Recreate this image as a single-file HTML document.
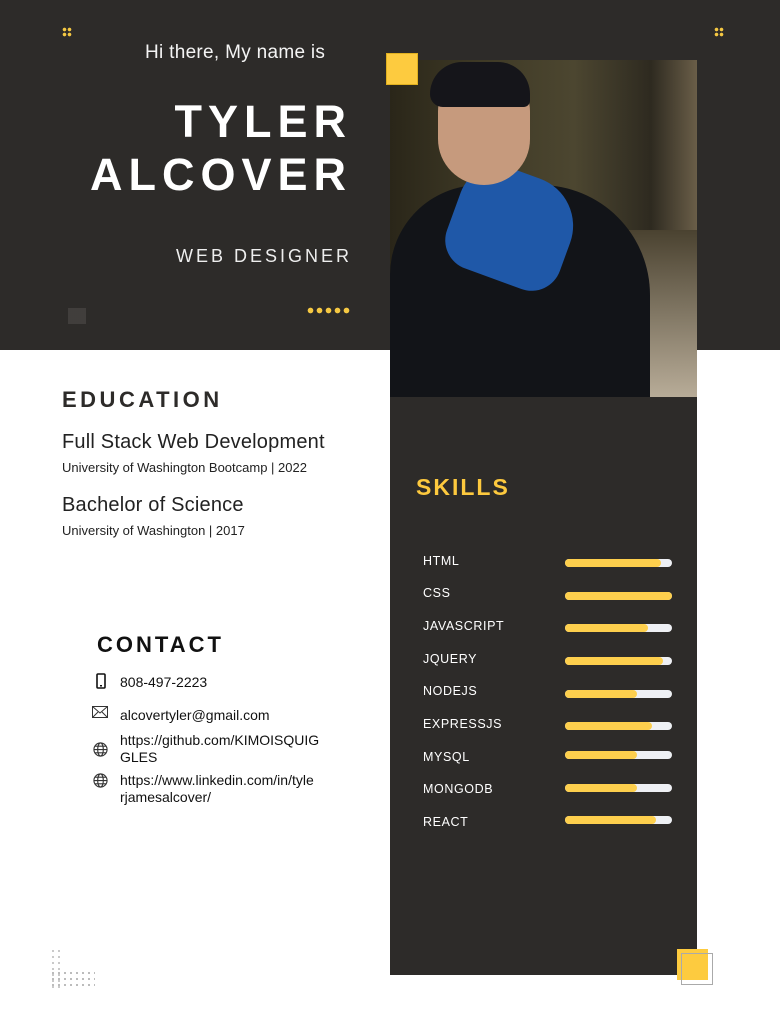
<!DOCTYPE html>
<html><head><meta charset="utf-8"><style>
*{margin:0;padding:0;box-sizing:border-box}
body{width:780px;height:1010px;background:#fff;position:relative;overflow:hidden;font-family:"Liberation Sans",sans-serif}
.a{position:absolute}
.hdr{left:0;top:0;width:780px;height:350px;background:#2d2b29}
.dots4{width:10px;height:10px;background:radial-gradient(circle,#f5c842 1.6px,transparent 2px) 0 0/5px 5px}
.w{color:#fff}
.skill{left:423px;color:#fff;font-size:12.5px;letter-spacing:.6px}
.bar{left:565px;width:107px;height:8px;border-radius:4px;background:#eef0f4}
.bar i{display:block;height:8px;border-radius:4px;background:#fdcf4d}
.ct{left:120px;font-size:14px;color:#111;line-height:17px}
</style></head><body>
<div class="a hdr"></div>
<div class="a dots4" style="left:62px;top:27px"></div>
<div class="a dots4" style="left:714px;top:27px"></div>
<div class="a w" style="left:145px;top:42px;font-size:19px;letter-spacing:.3px;color:#f4f4f4">Hi there, My name is</div>
<div class="a w" style="right:428px;top:95px;font-size:45px;font-weight:bold;letter-spacing:6px;line-height:53px;text-align:right">TYLER<br>ALCOVER</div>
<div class="a w" style="right:428px;top:246px;font-size:18px;letter-spacing:3px;color:#eee">WEB DESIGNER</div>
<div class="a" style="left:68px;top:308px;width:18px;height:16px;background:radial-gradient(circle,#5a5856 .6px,transparent .9px) 0 0/2px 2px"></div>
<div class="a" style="left:306px;top:307px;width:45px;height:7px;background:radial-gradient(circle,#f5c842 2.6px,transparent 3px) 0 0/9px 7px"></div>
<!-- photo -->
<div class="a" style="left:390px;top:60px;width:307px;height:337px;overflow:hidden;background:linear-gradient(90deg,#2a2619 0%,#3f3a26 30%,#4c4630 60%,#2e2a20 85%,#6a5e48 100%)">
 <div class="a" style="left:210px;top:170px;width:97px;height:167px;background:linear-gradient(#4a4230,#b8ac98)"></div>
 <div class="a" style="left:0;top:125px;width:260px;height:230px;background:#121418;border-radius:90px 110px 0 0"></div>
 <div class="a" style="left:62px;top:112px;width:120px;height:110px;background:#1f58a8;border-radius:40px 50px 30px 30px;transform:rotate(20deg)"></div>
 <div class="a" style="left:48px;top:10px;width:92px;height:115px;background:#c69a7d;border-radius:45px 45px 50px 50px"></div>
 <div class="a" style="left:40px;top:2px;width:100px;height:45px;background:#15151a;border-radius:50px 50px 10px 20px"></div>
</div>
<div class="a" style="left:386px;top:53px;width:32px;height:32px;background:#fdcb3f;border:1px solid #e0b020"></div>
<div class="a" style="left:390px;top:397px;width:307px;height:578px;background:#2d2b29"></div>
<div class="a" style="left:416px;top:474px;color:#fdc93e;font-size:23px;font-weight:bold;letter-spacing:2px">SKILLS</div>

<div class="a skill" style="top:554px">HTML</div><div class="a bar" style="top:559px"><i style="width:96px"></i></div>
<div class="a skill" style="top:586px">CSS</div><div class="a bar" style="top:592px"><i style="width:107px"></i></div>
<div class="a skill" style="top:619px">JAVASCRIPT</div><div class="a bar" style="top:624px"><i style="width:83px"></i></div>
<div class="a skill" style="top:652px">JQUERY</div><div class="a bar" style="top:657px"><i style="width:98px"></i></div>
<div class="a skill" style="top:684px">NODEJS</div><div class="a bar" style="top:690px"><i style="width:72px"></i></div>
<div class="a skill" style="top:717px">EXPRESSJS</div><div class="a bar" style="top:722px"><i style="width:87px"></i></div>
<div class="a skill" style="top:750px">MYSQL</div><div class="a bar" style="top:751px"><i style="width:72px"></i></div>
<div class="a skill" style="top:782px">MONGODB</div><div class="a bar" style="top:784px"><i style="width:72px"></i></div>
<div class="a skill" style="top:815px">REACT</div><div class="a bar" style="top:816px"><i style="width:91px"></i></div>

<div class="a" style="left:677px;top:949px;width:31px;height:31px;background:#fdcb3f"></div>
<div class="a" style="left:681px;top:953px;width:32px;height:32px;border:1px solid #aaa"></div>
<div class="a" style="left:50px;top:948px;width:12px;height:42px;background:radial-gradient(circle,#bbb .8px,transparent 1.1px) 0 0/6px 6px"></div>
<div class="a" style="left:50px;top:970px;width:45px;height:20px;background:radial-gradient(circle,#aaa .8px,transparent 1.1px) 0 0/6px 6px"></div>

<div class="a" style="left:62px;top:387px;font-size:22px;font-weight:bold;letter-spacing:3.5px;color:#2d2b29">EDUCATION</div>
<div class="a" style="left:62px;top:431px;font-size:20px;color:#222;letter-spacing:.2px">Full Stack Web Development</div>
<div class="a" style="left:62px;top:460px;font-size:13px;color:#222">University of Washington Bootcamp | 2022</div>
<div class="a" style="left:62px;top:494px;font-size:20px;color:#222;letter-spacing:.2px">Bachelor of Science</div>
<div class="a" style="left:62px;top:523px;font-size:13px;color:#222">University of Washington | 2017</div>

<div class="a" style="left:97px;top:632px;font-size:22px;font-weight:bold;letter-spacing:3px;color:#111">CONTACT</div>
<svg class="a" style="left:95px;top:673px" width="12" height="16" viewBox="0 0 12 16"><rect x="2" y="1" width="8" height="14" rx="1" fill="none" stroke="#111" stroke-width="1.6"/><rect x="5" y="12" width="2" height="1.5" fill="#111"/></svg>
<div class="a ct" style="top:674px">808-497-2223</div>
<svg class="a" style="left:92px;top:706px" width="16" height="12" viewBox="0 0 16 12"><rect x=".5" y=".5" width="15" height="11" fill="none" stroke="#333"/><path d="M.5 .5L8 7 15.5 .5M.5 11.5L6 6M15.5 11.5L10 6" fill="none" stroke="#333"/></svg>
<div class="a ct" style="top:707px">alcovertyler@gmail.com</div>
<svg class="a" style="left:93px;top:742px" width="15" height="15" viewBox="0 0 16 16"><g fill="none" stroke="#333" stroke-width="1.2"><circle cx="8" cy="8" r="7"/><ellipse cx="8" cy="8" rx="3" ry="7"/><path d="M1 8h14M2 4.5h12M2 11.5h12"/></g></svg>
<div class="a ct" style="top:732px">https://github.com/KIMOISQUIG<br>GLES</div>
<svg class="a" style="left:93px;top:773px" width="15" height="15" viewBox="0 0 16 16"><g fill="none" stroke="#333" stroke-width="1.2"><circle cx="8" cy="8" r="7"/><ellipse cx="8" cy="8" rx="3" ry="7"/><path d="M1 8h14M2 4.5h12M2 11.5h12"/></g></svg>
<div class="a ct" style="top:772px">https://www.linkedin.com/in/tyle<br>rjamesalcover/</div>
</body></html>
